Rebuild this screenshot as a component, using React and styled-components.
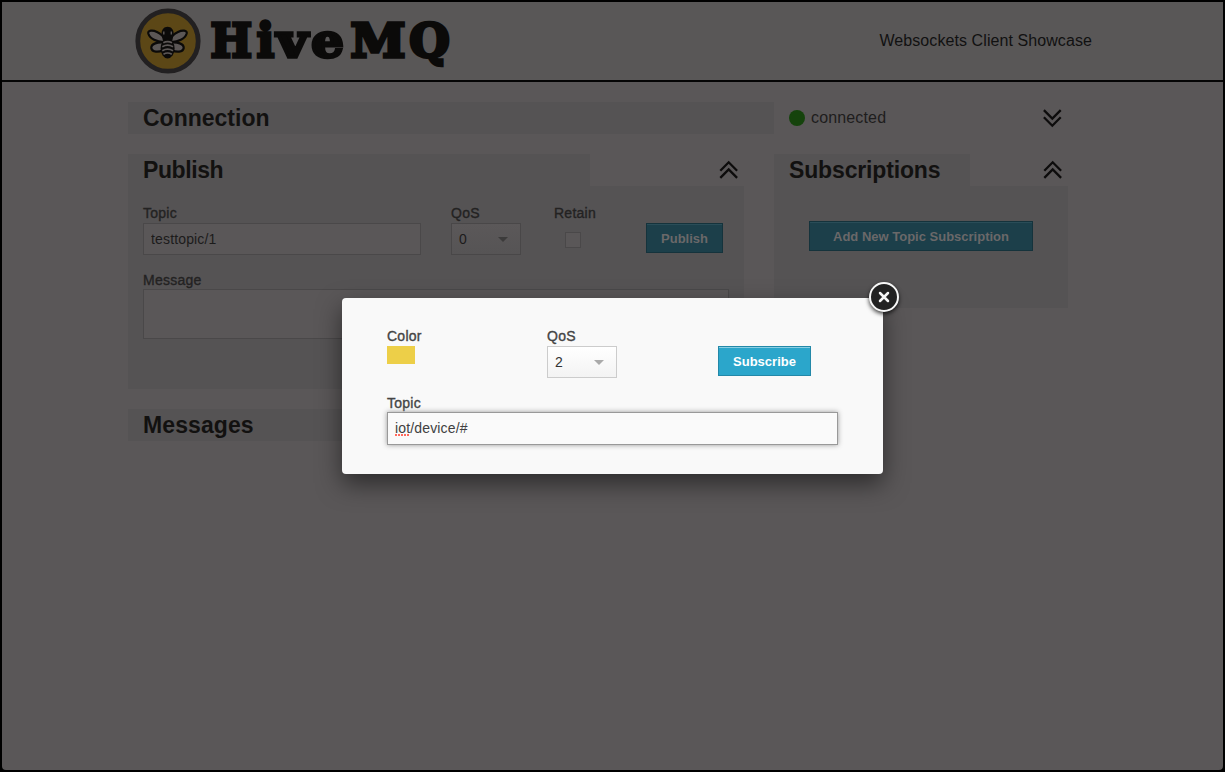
import React from "react";
import styled, { createGlobalStyle, css } from "styled-components";

const Global = createGlobalStyle`
  *, *::before, *::after { box-sizing: border-box; }
  html { background: #000; }
  body {
    margin: 0;
    background: #000;
    font-family: "Liberation Sans", Arial, Helvetica, sans-serif;
    font-size: 14px;
    color: #222;
  }
`;

const Window = styled.div`
  position: relative;
  width: 1225px;
  height: 772px;
  border: 2px solid #000;
  border-radius: 0 0 6px 6px;
  background: #5a5758;
  overflow: hidden;
`;

const Header = styled.header`
  display: flex;
  justify-content: space-between;
  height: 80px;
  padding: 0 131px 0 128px;
  border-bottom: 2px solid #050505;
  background: #595757;
`;

const Tagline = styled.span`
  margin-top: 29px;
  font-size: 16px;
  line-height: 20px;
  letter-spacing: 0.08px;
  white-space: nowrap;
  color: #111;
`;

const Main = styled.main`
  width: 940px;
  margin: 20px 0 0 126px;
  display: flex;
  flex-direction: column;
  gap: 20px;
`;

const Row = styled.div`
  display: flex;
  align-items: flex-start;
`;

const Columns = styled(Row)`
  gap: 30px;
`;

const Title = styled.h3`
  margin: 0;
  width: ${(p) => p.$width}px;
  height: 32px;
  padding-left: 15px;
  background: #555354;
  color: #121110;
  font-size: 23px;
  line-height: 33px;
  font-weight: bold;
  letter-spacing: ${(p) => p.$track || 0}px;
`;

const Status = styled.div`
  display: flex;
  align-items: center;
  gap: 6px;
  flex: 1;
  height: 31px;
  padding: 0 6px 0 15px;
  font-size: 16px;
  letter-spacing: 0.15px;
  color: #1e1d1d;
`;

const Dot = styled.span`
  width: 16px;
  height: 16px;
  border-radius: 50%;
  background: #15430c;
`;

const Spacer = styled.span`
  flex: 1;
`;

const Panel = styled.section`
  width: ${(p) => p.$width}px;
`;

const PanelHead = styled.div`
  display: flex;
  align-items: center;
  justify-content: space-between;
  height: 32px;
  padding-right: 5px;
`;

const PanelBody = styled.div`
  height: ${(p) => p.$height}px;
  padding: ${(p) => p.$pad};
  background: #555354;
`;

const Field = styled.label`
  display: flex;
  flex-direction: column;
  width: ${(p) => (p.$width ? p.$width + "px" : "auto")};
  margin-left: ${(p) => p.$gap || 0}px;
`;

const MessageField = styled(Field)`
  width: 586px;
  margin-top: 16px;
`;

const Caption = styled.span`
  height: 18px;
  font-size: 14px;
  line-height: ${(p) => (p.$low ? 18 : 16)}px;
  letter-spacing: 0.25px;
  -webkit-text-stroke: 0.35px currentColor;
  color: ${(p) => (p.$lit ? "#444" : "#232222")};
`;

const boxLook = css`
  display: block;
  width: 100%;
  outline: none;
  border-radius: 0;
  font: 14px "Liberation Sans", Arial, sans-serif;
`;

const TextInput = styled.input`
  ${boxLook}
  height: ${(p) => (p.$lit ? 33 : 32)}px;
  padding: ${(p) => (p.$lit ? "0 7px 1px" : "0 7px")};
  letter-spacing: 0.15px;
  border: 1px solid ${(p) => (p.$lit ? "#999" : "#4a4849")};
  background: ${(p) => (p.$lit ? "#fafafa" : "#5a5758")};
  color: ${(p) => (p.$lit ? "#404040" : "#1c1b1b")};
  ${(p) => p.$lit && css`box-shadow: 0 0 5px #999;`}
`;

const TextArea = styled.textarea`
  ${boxLook}
  height: 50px;
  resize: none;
  border: 1px solid #4a4849;
  background: #5a5758;
`;

const SelectBox = styled.span`
  display: flex;
  align-items: center;
  justify-content: space-between;
  width: 70px;
  height: 32px;
  padding: 0 12px 0 7px;
  border: 1px solid ${(p) => (p.$lit ? "#ccc" : "#494748")};
  background: ${(p) =>
    p.$lit
      ? "linear-gradient(#fff, #f3f3f3)"
      : "linear-gradient(#5b5859, #565455)"};
  color: ${(p) => (p.$lit ? "#333" : "#1c1b1b")};
  &::after {
    content: "";
    border: 5px solid transparent;
    border-top-color: ${(p) => (p.$lit ? "#aaa" : "#3c3b3b")};
    border-bottom: 0;
  }
`;

const Check = styled.span`
  width: 16px;
  height: 16px;
  margin: 9px 0 0 11px;
  border: 1px solid #4a4849;
  background: #5a5758;
`;

const Button = styled.button`
  width: ${(p) => p.$width}px;
  height: 30px;
  margin: ${(p) => p.$margin || "0"};
  padding: 1px 0 0;
  font: bold 13px "Liberation Sans", Arial, sans-serif;
  white-space: nowrap;
  border: 1px solid ${(p) => (p.$lit ? "#2388a8" : "#15333c")};
  background: ${(p) => (p.$lit ? "#2ba6cb" : "#1c3f4a")};
  color: ${(p) => (p.$lit ? "#fff" : "#6a6869")};
  box-shadow: inset 0 1px 0 ${(p) => (p.$lit ? "#8acee3" : "#2a4d58")};
`;

const Modal = styled.div`
  position: absolute;
  left: 340px;
  top: 296px;
  width: 541px;
  height: 176px;
  padding: 30px 45px 0;
  border-radius: 4px;
  background: #f9f9f9;
  box-shadow: 0 10px 25px rgba(0, 0, 0, 0.5);
`;

const ModalRow = styled(Row)`
  height: 66px;
`;

const Swatch = styled.span`
  width: 28px;
  height: 18px;
  background: #edcf48;
`;

const Misspelled = styled.span`
  position: absolute;
  left: 53px;
  top: 136px;
  width: 15px;
  height: 2px;
  background: repeating-linear-gradient(90deg, #ff6a5e 0 2px, transparent 2px 3px);
`;

const Close = styled.button`
  position: absolute;
  right: -16px;
  top: -16px;
  width: 30px;
  height: 30px;
  padding: 0;
  display: flex;
  align-items: center;
  justify-content: center;
  border: 2.5px solid #f7f7f7;
  border-radius: 50%;
  background: #222;
  box-shadow: 0 2px 4px rgba(0, 0, 0, 0.75);
`;

const LETTERS = [
  ["H", 210.5, 41.5],
  ["i", 256.8, 17.5],
  ["v", 276.8, 31],
  ["e", 311.2, 32.5],
  ["M", 350.5, 55],
  ["Q", 409.3, 40.5],
];

function Chevrons({ down }) {
  return (
    <svg width="20" height="20" viewBox="0 0 20 20" fill="none" stroke="#0d0c0c" strokeWidth="2.3">
      <g transform={down ? "rotate(180 10 10)" : undefined}>
        <path d="M1.300 10.700 9.700 2.300 18.100 10.700" />
        <path d="M1.300 17.900 9.700 9.500 18.100 17.900" />
      </g>
    </svg>
  );
}

function Logo() {
  return (
    <svg width="330" height="78" viewBox="130 2 330 78">
      <circle cx="168" cy="41" r="30.2" fill="#5c4716" stroke="#222021" strokeWidth="4.800" />
      <g fill="#5c5756" stroke="#0b0a09" strokeWidth="2.2" strokeLinejoin="round">
        <path d="M163.500 42C157 42 150 39 148.300 33.500C147.500 30 153 30 157 32C161 34 164 37 165 40Z" />
        <path d="M171.500 42C178 42 185 39 186.700 33.500C187.500 30 182 30 178 32C174 34 171 37 170 40Z" />
        <path d="M163.500 42.500C158 42 151 43.500 151.300 48C152 52.500 159 52.500 163 50Z" />
        <path d="M171.500 42.500C177 42 184 43.500 183.700 48C183 52.500 176 52.500 172 50Z" />
      </g>
      <path d="M161.500 34C161.500 29.500 164 26.700 167.600 26.700S173.700 29.500 173.700 34L172 42H163.200Z" fill="#0b0a09" />
      <path d="M163.800 31.500v3M171.300 31.500v3" stroke="#5c5756" strokeWidth="1.400" />
      <ellipse cx="167.600" cy="48.500" rx="7" ry="10" fill="#0b0a09" />
      <path
        d="M163.300 42.800Q167.600 40.500 172 42.800M162.300 46.700Q167.600 43.600 173 46.700M162.300 50.700Q167.600 47.600 173 50.700M163.500 54.300Q167.600 51.700 171.800 54.300"
        stroke="#5c5756"
        strokeWidth="1.700"
        fill="none"
      />
      <text
        y="57"
        fontFamily="DejaVu Serif, serif"
        fontWeight="bold"
        fontSize="46"
        fill="#0b0a09"
        stroke="#0b0a09"
        strokeWidth="3.300"
      >
        {LETTERS.map(([letter, x, width]) => (
          <tspan key={letter} x={x} textLength={width} lengthAdjust="spacingAndGlyphs">
            {letter}
          </tspan>
        ))}
      </text>
    </svg>
  );
}

export default function App() {
  return (
    <>
      <Global />
      <Window>
        <Header>
          <Logo />
          <Tagline>Websockets Client Showcase</Tagline>
        </Header>
        <Main>
          <Row>
            <Title $width={646}>Connection</Title>
            <Status>
              <Dot />
              connected
              <Spacer />
              <Chevrons down />
            </Status>
          </Row>
          <Columns>
            <Panel $width={616}>
              <PanelHead>
                <Title $width={462} $track={-0.4}>Publish</Title>
                <Chevrons />
              </PanelHead>
              <PanelBody $height={203} $pad="19px 15px 0">
                <Row>
                  <Field $width={278}>
                    <Caption>Topic</Caption>
                    <TextInput defaultValue="testtopic/1" />
                  </Field>
                  <Field $gap={30} $width={70}>
                    <Caption>QoS</Caption>
                    <SelectBox>0</SelectBox>
                  </Field>
                  <Field $gap={33} $width={50}>
                    <Caption>Retain</Caption>
                    <Check />
                  </Field>
                  <Button $width={77} $margin="18px 0 0 42px">Publish</Button>
                </Row>
                <MessageField>
                  <Caption $low>Message</Caption>
                  <TextArea />
                </MessageField>
              </PanelBody>
            </Panel>
            <Panel $width={294}>
              <PanelHead>
                <Title $width={196} $track={-0.15}>Subscriptions</Title>
                <Chevrons />
              </PanelHead>
              <PanelBody $height={122} $pad="35px 35px 0">
                <Button $width={224}>Add New Topic Subscription</Button>
              </PanelBody>
            </Panel>
          </Columns>
          <Title $width={646} $track={0.1}>Messages</Title>
        </Main>
        <Modal>
          <ModalRow>
            <Field $width={130}>
              <Caption $lit>Color</Caption>
              <Swatch />
            </Field>
            <Field $gap={30} $width={70}>
              <Caption $lit>QoS</Caption>
              <SelectBox $lit>2</SelectBox>
            </Field>
            <Button $lit $width={93} $margin="18px 0 0 101px">Subscribe</Button>
          </ModalRow>
          <Field>
            <Caption $lit $low>Topic</Caption>
            <TextInput $lit defaultValue="iot/device/#" spellCheck={false} />
          </Field>
          <Misspelled />
          <Close aria-label="Close">
            <svg width="12" height="12" viewBox="0 0 12 12" stroke="#f5f5f5" strokeWidth="2.500" strokeLinecap="round">
              <path d="M2 2 10 10M10 2 2 10" />
            </svg>
          </Close>
        </Modal>
      </Window>
    </>
  );
}
